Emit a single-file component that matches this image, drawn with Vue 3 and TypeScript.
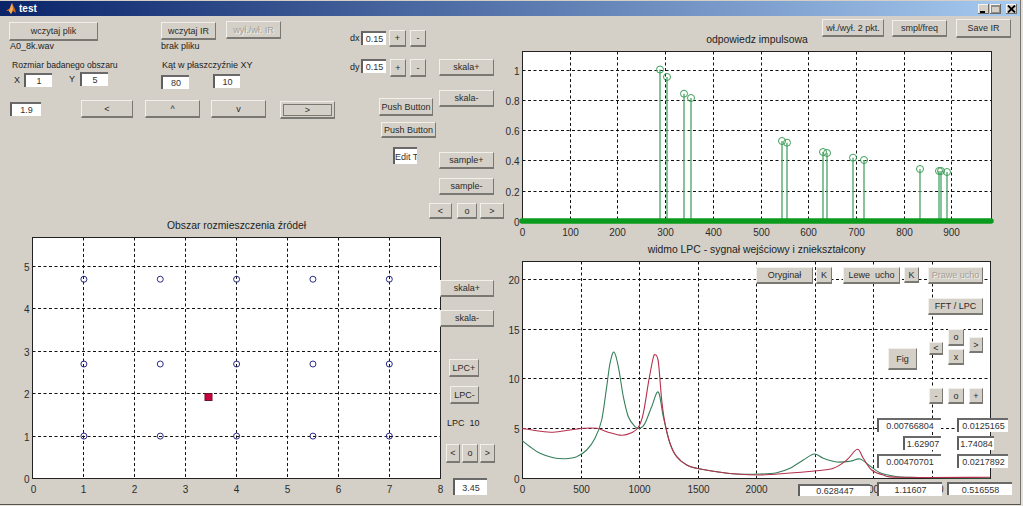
<template>
  <div class="window">
    <div class="titlebar">
      <svg class="logo" width="10" height="12" viewBox="0 0 10 12">
        <path d="M0 8 L4 5 L6 0 L9 6 L10 10 L7 8 L5 11 L3 8 Z" fill="#c8661c" />
        <path d="M4 5 L6 0 L7 6 L5 11 L3 8 Z" fill="#f0b060" />
      </svg>
      <span class="title">test</span>
      <div class="caption">
        <span class="cap-btn"><svg width="9" height="8" viewBox="0 0 9 8"><rect x="1" y="6" width="5" height="2" fill="#000" /></svg></span>
        <span class="cap-btn"><svg width="9" height="8" viewBox="0 0 9 8"><rect x="0.5" y="0.5" width="8" height="7" fill="none" stroke="#8e8c86" /><rect x="0.5" y="0.5" width="8" height="1.5" fill="#8e8c86" /></svg></span>
        <span class="cap-btn close"><svg width="9" height="8" viewBox="0 0 9 8"><path d="M1 0.5 L8 7.5 M8 0.5 L1 7.5" stroke="#000" stroke-width="1.8" /></svg></span>
      </div>
    </div>

    <div class="figure">
      <svg class="plots" width="1023" height="490" viewBox="0 16 1023 490">
        <g v-for="(a, i) in axes" :key="i">
          <rect :x="a.l" :y="a.t" :width="a.r - a.l" :height="a.b - a.t" fill="#fff" />
          <line
            v-for="t in a.xt.filter(t => t.p > a.l + 1 && t.p < a.r - 1)"
            :key="'v' + t.label"
            :x1="t.p" :x2="t.p" :y1="a.t" :y2="a.b"
            class="grid"
          />
          <line
            v-for="t in a.yt.filter(t => t.p < a.b - 1)"
            :key="'h' + t.label"
            :x1="a.l" :x2="a.r" :y1="t.p" :y2="t.p"
            class="grid"
          />
          <rect :x="a.l" :y="a.t" :width="a.r - a.l" :height="a.b - a.t" fill="none" stroke="#222" />
          <text
            v-for="t in a.xt"
            :key="'x' + t.label"
            :x="t.p" :y="a.b + 14"
            text-anchor="middle"
            class="tick"
          >{{ t.label }}</text>
          <text
            v-for="t in a.yt"
            :key="'y' + t.label"
            :x="a.l - 3" :y="t.p + 4"
            text-anchor="end"
            class="tick"
          >{{ t.label }}</text>
          <text :x="(a.l + a.r) / 2" :y="a.t - 9" text-anchor="middle" class="plot-title">{{ a.title }}</text>
        </g>

        <!-- odpowiedz impulsowa -->
        <g v-for="s in stems" :key="s[0]">
          <line :x1="s[0]" :x2="s[0]" :y1="s[1]" y2="221" stroke="#55aa70" stroke-width="1.4" />
          <circle :cx="s[0]" :cy="s[1]" r="3.5" fill="none" stroke="#3d9f58" />
        </g>
        <line x1="522" x2="991" y1="221" y2="221" stroke="#0a9a1e" stroke-width="5.500" stroke-linecap="round" />

        <!-- obszar rozmieszczenia -->
        <g v-for="p in sources" :key="p.x + '-' + p.y">
          <circle :cx="p.x" :cy="p.y" r="3" fill="none" stroke="#2b2b86" />
        </g>
        <rect x="205" y="393.500" width="7" height="7" fill="#c8003c" stroke="#701030" />

        <!-- widmo LPC -->
        <path :d="greenPath" fill="none" stroke="#35805a" stroke-width="1.1" />
        <path :d="redPath" fill="none" stroke="#b5304c" stroke-width="1.1" />
      </svg>

      <div
        v-for="l in labels"
        :key="l.text"
        class="label"
        :style="{ left: l.x + 'px', top: l.y - 22 + 'px', fontSize: (l.size ?? 9) + 'px' }"
      >{{ l.text }}</div>

      <input
        v-for="e in edits"
        :key="e.v + e.box[0]"
        class="edit"
        readonly
        :value="e.v"
        :style="boxStyle(e.box)"
      />

      <button
        v-for="b in buttons"
        :key="b.text + b.box[0] + b.box[1]"
        class="btn"
        :class="{ off: b.off, focus: b.focus }"
        type="button"
        :style="boxStyle(b.box)"
      >{{ b.text }}</button>
    </div>
  </div>
</template>

<script setup lang="ts">
type Box = [number, number, number, number];
type Pt = [number, number];

interface Tick { p: number; label: string }
interface Axes {
  l: number; t: number; r: number; b: number;
  title: string;
  xt: Tick[]; yt: Tick[];
}

const FIGURE_TOP = 16;

const boxStyle = (b: Box) => ({
  left: b[0] + 'px',
  top: b[1] - FIGURE_TOP + 'px',
  width: b[2] - b[0] + 'px',
  height: b[3] - b[1] + 'px'
});

// snap to the pixel grid so the dashed lines stay crisp
const ticks = (from: number, step: number, labels: (string | number)[]): Tick[] =>
  labels.map((label, i) => ({ p: Math.floor(from + i * step) + 0.5, label: String(label) }));

const axes: Axes[] = [
  {
    l: 522.5, t: 51.5, r: 991.5, b: 221.5,
    title: 'odpowiedz impulsowa',
    xt: ticks(522.5, 47.7, [0, 100, 200, 300, 400, 500, 600, 700, 800, 900]),
    yt: ticks(221.5, -30.3, [0, 0.2, 0.4, 0.6, 0.8, 1])
  },
  {
    l: 32.5, t: 237.5, r: 440.5, b: 478.5,
    title: 'Obszar rozmieszczenia źródeł',
    xt: ticks(33, 50.9, [0, 1, 2, 3, 4, 5, 6, 7, 8]),
    yt: ticks(478.5, -42.4, [0, 1, 2, 3, 4, 5])
  },
  {
    l: 522.5, t: 261.5, r: 990.5, b: 478.5,
    title: 'widmo LPC - sygnał wejściowy i zniekształcony',
    xt: ticks(522.5, 58.5, [0, 500, 1000, 1500, 2000, 2500, 3000, 3500]),
    yt: ticks(478.5, -49.8, [0, 5, 10, 15, 20])
  }
];

const stems: Pt[] = [
  [660, 69.5], [667, 77], [684, 93.7], [691, 98], [782, 141], [787, 142.7], [823, 152],
  [827, 153], [853, 157.7], [864, 160], [920, 169], [939, 171], [941, 171], [947, 172]
];

const sources = [1, 2.5, 4, 5.5, 7].flatMap(x =>
  [1, 2.7, 4.7].map(y => ({ x: 33 + x * 50.9, y: 478.5 - y * 42.4 }))
);

// Catmull-Rom through the sampled curve points
const smooth = (pts: Pt[]): string => {
  let d = `M${pts[0][0]} ${pts[0][1]}`;
  for (let i = 0; i < pts.length - 1; i++) {
    const p0 = pts[Math.max(0, i - 1)];
    const p1 = pts[i];
    const p2 = pts[i + 1];
    const p3 = pts[Math.min(pts.length - 1, i + 2)];
    const c1x = p1[0] + (p2[0] - p0[0]) / 6;
    const c1y = p1[1] + (p2[1] - p0[1]) / 6;
    const c2x = p2[0] - (p3[0] - p1[0]) / 6;
    const c2y = p2[1] - (p3[1] - p1[1]) / 6;
    d += ` C${c1x.toFixed(1)} ${c1y.toFixed(1)} ${c2x.toFixed(1)} ${c2y.toFixed(1)} ${p2[0].toFixed(1)} ${p2[1].toFixed(1)}`;
  }
  return d;
};

// points read off the plot, left part then right part
const fromLeft = (pts: Pt[]): Pt[] => pts.map(p => [510 + p[0] / 3, 240 + p[1] / 3]);
const fromRight = (pts: Pt[]): Pt[] => pts.map(p => [760 + p[0] / 3, 240 + p[1] / 3]);

const tailLeft: Pt[] = [[480, 610], [500, 650], [530, 675], [560, 685], [620, 695], [680, 702]];

const greenPath = smooth([
  ...fromLeft([
    [37, 602], [60, 620], [90, 640], [130, 653], [165, 656], [200, 650], [230, 630], [255, 595],
    [275, 540], [290, 440], [300, 370], [312, 336], [325, 380], [340, 470], [355, 530], [375, 560],
    [390, 565], [405, 550], [425, 500], [445, 456], [460, 530], ...tailLeft
  ]),
  ...fromRight([
    [0, 702], [50, 698], [90, 685], [130, 660], [163, 642], [190, 655], [230, 666], [270, 664],
    [300, 657], [330, 678], [360, 698], [400, 708], [450, 712], [690, 714]
  ])
]);

const redPath = smooth([
  ...fromLeft([
    [37, 565], [80, 572], [130, 577], [180, 570], [220, 565], [260, 565], [290, 575], [335, 586],
    [365, 578], [385, 562], [400, 520], [415, 430], [428, 360], [435, 344], [445, 365], [455, 480],
    [465, 550], ...tailLeft
  ]),
  ...fromRight([
    [0, 705], [80, 700], [163, 693], [220, 685], [260, 660], [292, 628], [310, 655], [335, 690],
    [370, 705], [420, 712], [690, 712]
  ])
]);

const labels: { x: number; y: number; text: string; size?: number }[] = [
  { x: 10, y: 46, text: 'A0_8k.wav' },
  { x: 161, y: 46, text: 'brak pliku' },
  { x: 12, y: 65, text: 'Rozmiar badanego obszaru', size: 8.6 },
  { x: 162, y: 65, text: 'Kąt w płaszczyźnie XY' },
  { x: 14, y: 80, text: 'X' },
  { x: 69, y: 79, text: 'Y' },
  { x: 350, y: 38, text: 'dx' },
  { x: 350, y: 67, text: 'dy' },
  { x: 447, y: 423, text: 'LPC  10' }
];

const edits: { v: string; box: Box }[] = [
  { v: '1', box: [24, 73, 52, 87] },
  { v: '5', box: [80, 72, 108, 86] },
  { v: '80', box: [161, 75, 189, 89] },
  { v: '10', box: [213, 74, 240, 88] },
  { v: '1.9', box: [10, 102, 41, 116] },
  { v: '0.15', box: [361, 31, 386, 45] },
  { v: '0.15', box: [361, 59, 386, 73] },
  { v: 'Edit T', box: [393, 147, 417, 164] },
  { v: '3.45', box: [453, 478, 487, 495] },
  { v: '0.00766804', box: [877, 418, 941, 432] },
  { v: '0.0125165', box: [957, 418, 1008, 432] },
  { v: '1.62907', box: [903, 436, 941, 450] },
  { v: '1.74084', box: [957, 436, 994, 450] },
  { v: '0.00470701', box: [877, 454, 941, 468] },
  { v: '0.0217892', box: [957, 454, 1008, 468] },
  { v: '0.628447', box: [798, 484, 870, 496] },
  { v: '1.11607', box: [877, 482, 942, 496] },
  { v: '0.516558', box: [947, 482, 1012, 495] }
];

const buttons: { text: string; box: Box; off?: boolean; focus?: boolean }[] = [
  { text: 'wczytaj plik', box: [9, 22, 98, 41] },
  { text: 'wczytaj IR', box: [161, 22, 216, 40] },
  { text: 'wył./wł. IR', box: [226, 21, 281, 39], off: true },
  { text: '<', box: [81, 100, 133, 118] },
  { text: '^', box: [145, 100, 200, 118] },
  { text: 'v', box: [211, 100, 266, 118] },
  { text: '>', box: [280, 101, 335, 119], focus: true },
  { text: '+', box: [389, 30, 406, 47] },
  { text: '-', box: [410, 30, 426, 47] },
  { text: '+', box: [390, 59, 406, 77] },
  { text: '-', box: [410, 59, 426, 77] },
  { text: 'skala+', box: [439, 59, 494, 76] },
  { text: 'skala-', box: [439, 90, 494, 107] },
  { text: 'Push Button', box: [379, 98, 433, 116] },
  { text: 'Push Button', box: [381, 122, 436, 138] },
  { text: 'sample+', box: [439, 152, 494, 169] },
  { text: 'sample-', box: [439, 178, 494, 195] },
  { text: '<', box: [429, 203, 452, 219] },
  { text: 'o', box: [457, 203, 477, 219] },
  { text: '>', box: [480, 203, 504, 219] },
  { text: 'wł./wył. 2 pkt.', box: [822, 19, 884, 37] },
  { text: 'smpl/freq', box: [892, 20, 947, 37] },
  { text: 'Save IR', box: [956, 19, 1011, 38] },
  { text: 'skala+', box: [440, 280, 494, 297] },
  { text: 'skala-', box: [440, 310, 494, 327] },
  { text: 'LPC+', box: [449, 359, 479, 377] },
  { text: 'LPC-', box: [450, 386, 479, 404] },
  { text: '<', box: [446, 444, 460, 463] },
  { text: 'o', box: [462, 444, 478, 463] },
  { text: '>', box: [480, 444, 495, 463] },
  { text: 'Oryginał', box: [756, 267, 813, 284] },
  { text: 'K', box: [816, 267, 832, 284] },
  { text: 'Lewe  ucho', box: [843, 267, 900, 284] },
  { text: 'K', box: [904, 267, 919, 283] },
  { text: 'Prawe ucho', box: [928, 267, 983, 284], off: true },
  { text: 'FFT / LPC', box: [928, 298, 983, 315] },
  { text: '<', box: [929, 342, 943, 355] },
  { text: 'o', box: [948, 329, 964, 346] },
  { text: 'x', box: [948, 349, 964, 365] },
  { text: '>', box: [969, 337, 983, 353] },
  { text: 'Fig', box: [888, 348, 917, 370] },
  { text: '-', box: [929, 388, 943, 404] },
  { text: 'o', box: [948, 388, 964, 404] },
  { text: '+', box: [969, 388, 983, 404] }
];
</script>

<style scoped>
.window {
  width: 1021px;
  height: 505px;
  padding-top: 1px;
  display: flex;
  flex-direction: column;
  box-sizing: border-box;
  background: #d4d0c8;
  border-right: 1px solid #77756f;
  border-bottom: 1px solid #55534f;
  font-family: "Liberation Sans", Arial, sans-serif;
  overflow: hidden;
}

.titlebar {
  height: 15px;
  flex: none;
  display: flex;
  align-items: center;
  padding: 0 3px 0 6px;
  gap: 3px;
  background: linear-gradient(to right, #0a246a, #a6caf0);
}

.title {
  color: #fff;
  font-size: 10px;
  font-weight: bold;
}

.caption {
  margin-left: auto;
  display: flex;
  gap: 1px;
}

.cap-btn {
  width: 11px;
  height: 10px;
  display: flex;
  align-items: center;
  justify-content: center;
  background: #d4d0c8;
  box-shadow: inset -1px -1px #6d6b66, inset 1px 1px #f4f3ef;
}

.cap-btn.close {
  margin-left: 4px;
}

.figure {
  position: relative;
  flex: 1;
}

.plots {
  position: absolute;
  left: 0;
  top: 0;
}

.grid {
  stroke: #111;
  stroke-dasharray: 3 2.5;
}

.tick {
  font-size: 10px;
  fill: #2c2c2c;
}

.plot-title {
  font-size: 10.4px;
  fill: #222;
}

.label {
  position: absolute;
  line-height: 12px;
  color: #222;
  white-space: pre;
}

.edit {
  position: absolute;
  box-sizing: border-box;
  margin: 0;
  padding: 0;
  text-align: center;
  font: 9px "Liberation Sans", Arial, sans-serif;
  color: #333;
  background: #fff;
  border: 0;
  border-top: 2px solid #6a6a6a;
  border-left: 2px solid #5f5f5f;
  outline: none;
}

.btn {
  position: absolute;
  box-sizing: border-box;
  margin: 0;
  padding: 0;
  font: 9px "Liberation Sans", Arial, sans-serif;
  color: #2a2a2a;
  white-space: pre;
  background: #d4d0c8;
  border: 0;
  border-top: 1px solid #f2f0ea;
  border-left: 1px solid #f2f0ea;
  border-right: 1px solid #7a7873;
  border-bottom: 2px solid #7a7873;
}

.btn.off {
  color: #a19e98;
  text-shadow: 1px 1px 0 #f2f0ea;
}

.btn.focus {
  outline: 1px solid #7a7873;
  outline-offset: -4px;
}
</style>

<style>
html,
body {
  margin: 0;
  background: #e4e1da;
  overflow: hidden;
}
</style>
